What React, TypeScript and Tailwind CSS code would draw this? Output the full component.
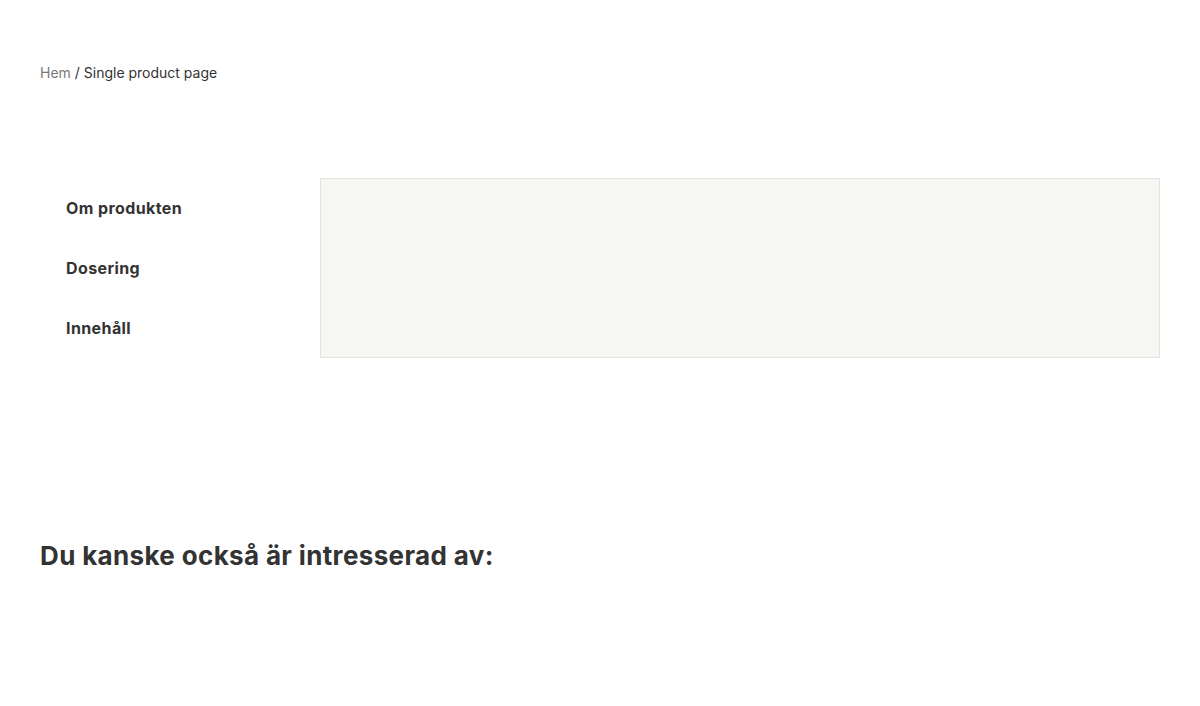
import React from "react";

const tabs = ["Om produkten", "Dosering", "Innehåll"];

export default function App() {
  return (
    <div className="min-h-[706px] bg-white px-10 font-['Inter',sans-serif] text-[#333333]">
      {/* breadcrumb */}
      <nav className="pt-[64px] text-[14px] leading-[18px]">
        <span className="text-[#7a7a7a]">Hem</span>
        <span> / Single product page</span>
      </nav>

      {/* product info tabs */}
      <section className="mt-[96px] flex">
        <ul className="flex w-[280px] flex-col gap-[40px] pl-[26px] pt-[20px]">
          {tabs.map((tab) => (
            <li
              key={tab}
              className="text-[16px] font-bold leading-[20px] tracking-[0.4px]"
            >
              {tab}
            </li>
          ))}
        </ul>
        <div className="h-[180px] flex-1 border border-[#e3e4e2] bg-[#f6f7f3]" />
      </section>

      {/* related */}
      <h2 className="mt-[182px] text-[26px] font-bold leading-[32px] tracking-[0.35px]">
        Du kanske också är intresserad av:
      </h2>
    </div>
  );
}
